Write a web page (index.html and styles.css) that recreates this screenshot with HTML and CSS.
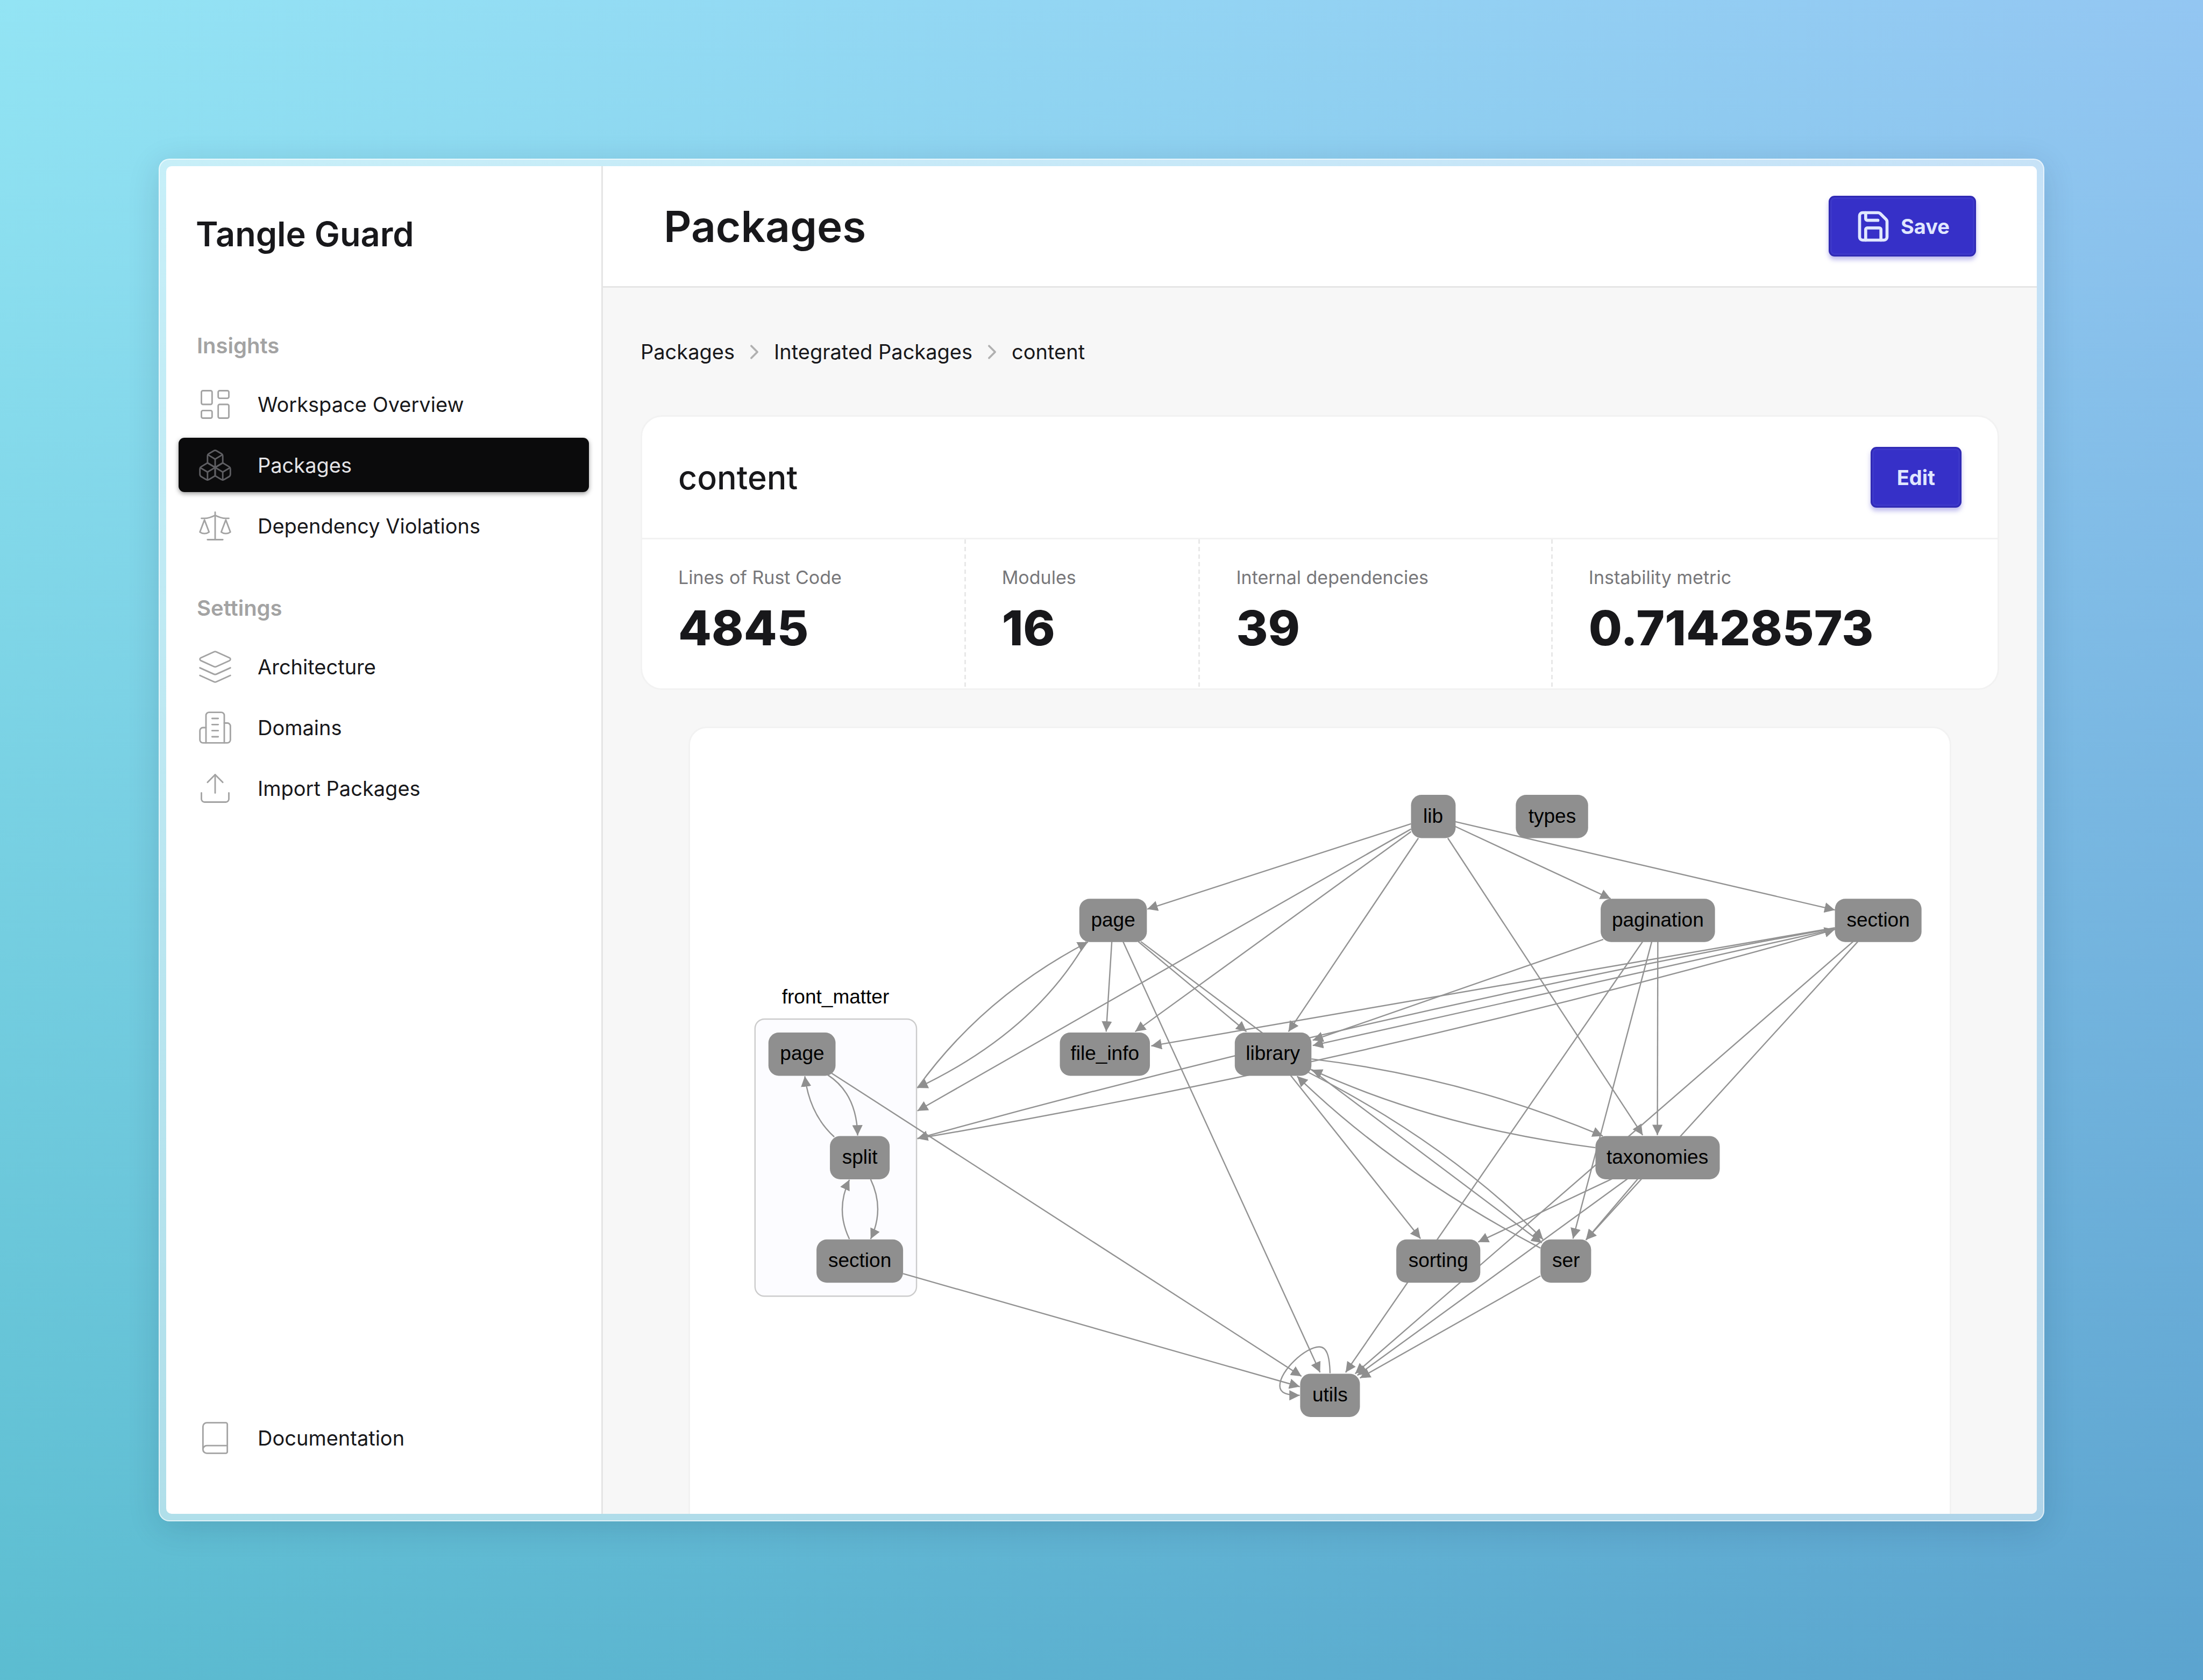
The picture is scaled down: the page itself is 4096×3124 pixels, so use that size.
FILE: index.html
```html
<!DOCTYPE html>
<html lang="en">
<head>
  <meta charset="utf-8">
  <meta name="viewport" content="width=device-width, initial-scale=1">
  <title>Packages - Tangle Guard</title>
  <link rel="stylesheet" href="styles.css">
</head>
<body>
  <div class="frame">
    <div class="window">
      <aside class="sidebar">
        <div class="brand">Tangle Guard</div>
        <nav class="nav" aria-label="Main">
          <section class="nav-group">
            <h2 class="nav-heading">Insights</h2>
            <ul class="nav-list">
              <li><a class="nav-item" href="#overview">
                <svg class="icon icon-thin" viewBox="0 0 24 24" aria-hidden="true"><rect width="7" height="9" x="3" y="3" rx="1"/><rect width="7" height="5" x="14" y="3" rx="1"/><rect width="7" height="9" x="14" y="12" rx="1"/><rect width="7" height="5" x="3" y="16" rx="1"/></svg>
                Workspace Overview</a></li>
              <li><a class="nav-item is-active" href="#packages" aria-current="page">
                <svg class="icon icon-thin" viewBox="0 0 24 24" aria-hidden="true"><path d="M2.97 12.92A2 2 0 0 0 2 14.63v3.24a2 2 0 0 0 .97 1.71l3 1.8a2 2 0 0 0 2.06 0L12 19v-5.5l-5-3-4.03 2.42Z"/><path d="m7 16.5-4.74-2.85"/><path d="m7 16.5 5-3"/><path d="M7 16.5v5.17"/><path d="M12 13.5V19l3.97 2.38a2 2 0 0 0 2.06 0l3-1.8a2 2 0 0 0 .97-1.71v-3.24a2 2 0 0 0-.97-1.71L17 10.5l-5 3Z"/><path d="m17 16.5-5-3"/><path d="m17 16.5 4.74-2.85"/><path d="M17 16.5v5.17"/><path d="M7.97 4.42A2 2 0 0 0 7 6.13v4.37l5 3 5-3V6.13a2 2 0 0 0-.97-1.71l-3-1.8a2 2 0 0 0-2.06 0l-3 1.8Z"/><path d="M12 8 7.26 5.15"/><path d="m12 8 4.74-2.85"/><path d="M12 13.5V8"/></svg>
                Packages</a></li>
              <li><a class="nav-item" href="#violations">
                <svg class="icon icon-thin" viewBox="0 0 24 24" aria-hidden="true"><path d="m16 16 3-8 3 8c-.87.65-1.92 1-3 1s-2.13-.35-3-1Z"/><path d="m2 16 3-8 3 8c-.87.65-1.92 1-3 1s-2.13-.35-3-1Z"/><path d="M7 21h10"/><path d="M12 3v18"/><path d="M3 7h2c2 0 5-1 7-2 2 1 5 2 7 2h2"/></svg>
                Dependency Violations</a></li>
            </ul>
          </section>
          <section class="nav-group">
            <h2 class="nav-heading">Settings</h2>
            <ul class="nav-list">
              <li><a class="nav-item" href="#architecture">
                <svg class="icon icon-thin" viewBox="0 0 24 24" aria-hidden="true"><path d="m12.83 2.18a2 2 0 0 0-1.66 0L2.6 6.08a1 1 0 0 0 0 1.83l8.58 3.91a2 2 0 0 0 1.66 0l8.58-3.9a1 1 0 0 0 0-1.83Z"/><path d="m22 12.65-9.17 4.16a2 2 0 0 1-1.66 0L2 12.65"/><path d="m22 17.65-9.17 4.16a2 2 0 0 1-1.66 0L2 17.65"/></svg>
                Architecture</a></li>
              <li><a class="nav-item" href="#domains">
                <svg class="icon icon-thin" viewBox="0 0 24 24" aria-hidden="true"><path d="M6 22V4a2 2 0 0 1 2-2h8a2 2 0 0 1 2 2v18Z"/><path d="M6 12H4a2 2 0 0 0-2 2v6a2 2 0 0 0 2 2h2"/><path d="M18 9h2a2 2 0 0 1 2 2v9a2 2 0 0 1-2 2h-2"/><path d="M10 6h4"/><path d="M10 10h4"/><path d="M10 14h4"/><path d="M10 18h4"/></svg>
                Domains</a></li>
              <li><a class="nav-item" href="#import">
                <svg class="icon icon-thin" viewBox="0 0 24 24" aria-hidden="true"><path d="M21 15v4a2 2 0 0 1-2 2H5a2 2 0 0 1-2-2v-4"/><path d="m17 8-5-5-5 5"/><path d="M12 3v12"/></svg>
                Import Packages</a></li>
            </ul>
          </section>
        </nav>
        <a class="nav-item nav-footer" href="#docs">
          <svg class="icon icon-thin" viewBox="0 0 24 24" aria-hidden="true"><path d="M4 19.5v-15A2.5 2.5 0 0 1 6.5 2H19a1 1 0 0 1 1 1v18a1 1 0 0 1-1 1H6.5a2.5 2.5 0 0 1 0-5H20"/></svg>
          Documentation</a>
      </aside>

      <main class="main">
        <header class="topbar">
          <h1 class="page-title">Packages</h1>
          <button class="button" type="button">
            <svg class="icon" viewBox="0 0 24 24" aria-hidden="true"><path d="M15.2 3a2 2 0 0 1 1.4.6l3.8 3.8a2 2 0 0 1 .6 1.4V19a2 2 0 0 1-2 2H5a2 2 0 0 1-2-2V5a2 2 0 0 1 2-2z"/><path d="M17 21v-7a1 1 0 0 0-1-1H8a1 1 0 0 0-1 1v7"/><path d="M7 3v4a1 1 0 0 0 1 1h7"/></svg>
            Save
          </button>
        </header>

        <div class="content">
          <nav aria-label="Breadcrumb">
            <ol class="breadcrumb">
              <li><a href="#packages">Packages</a></li>
              <li><svg class="chevron" viewBox="0 0 24 24" aria-hidden="true"><path d="m9 18 6-6-6-6"/></svg><a href="#integrated">Integrated Packages</a></li>
              <li><svg class="chevron" viewBox="0 0 24 24" aria-hidden="true"><path d="m9 18 6-6-6-6"/></svg><a href="#content" aria-current="page">content</a></li>
            </ol>
          </nav>

          <section class="card info-card">
            <div class="card-header">
              <h2 class="card-title">content</h2>
              <button class="button" type="button">Edit</button>
            </div>
            <dl class="stats">
              <div class="stat"><dt>Lines of Rust Code</dt><dd>4845</dd></div>
              <div class="stat"><dt>Modules</dt><dd>16</dd></div>
              <div class="stat"><dt>Internal dependencies</dt><dd>39</dd></div>
              <div class="stat"><dt>Instability metric</dt><dd>0.71428573</dd></div>
            </dl>
          </section>

          <section class="card graph-card">
            <svg class="graph" viewBox="1594 1681 2909 1900" role="img" aria-label="Module dependency graph">
              <defs>
                <marker id="arrow" viewBox="0 0 22 22" refX="22" refY="11" markerWidth="24" markerHeight="24" markerUnits="userSpaceOnUse" orient="auto"><path class="arrow-head" d="M0 0 22 11 0 22Z"/></marker>
              </defs>
              <rect class="cluster" x="1744" y="2353" width="373" height="640" rx="22"/>
              <g class="edges">
                <path d="M3259 1902 2650 2099"/>
                <path d="M3259 1914 2119 2565"/>
                <path d="M3259 1920 2622 2382"/>
                <path d="M3276 1935 2976 2382"/>
                <path d="M3344 1935 3794 2621"/>
                <path d="M3361 1908 3720 2075"/>
                <path d="M3361 1897 4238 2101"/>
                <path d="M2568 2174 2555 2382"/>
                <path d="M2629 2174 2879 2382"/>
                <path d="M2635 2174 3561 2870"/>
                <path d="M2594 2174 3049 3169"/>
                <path d="M2509 2174Q2388 2384 2119 2512"/>
                <path d="M2119 2512Q2270 2302 2513 2175"/>
                <path d="M4238 2142 2659 2415"/>
                <path d="M4238 2143Q3178 2335 2119 2629"/>
                <path d="M2119 2629Q3178 2448 4238 2146"/>
                <path d="M4238 2145 3032 2414"/>
                <path d="M3703 2169 3032 2402"/>
                <path d="M3794 2174 3108 3169"/>
                <path d="M3815 2174 3633 2860"/>
                <path d="M3829 2174 3828 2621"/>
                <path d="M4280 2174 3130 3172"/>
                <path d="M4291 2174 3663 2863"/>
                <path d="M3783 2722 3663 2863"/>
                <path d="M3723 2722 3414 2868"/>
                <path d="M3759 2722 3135 3176"/>
                <path d="M3558 2946 3141 3182"/>
                <path d="M2981 2483 3281 2860"/>
                <path d="M3029 2445Q3378 2487 3702 2623"/>
                <path d="M3685 2650Q3321 2603 3030 2470"/>
                <path d="M3558 2882Q3219 2703 2996 2485"/>
                <path d="M3022 2476Q3343 2640 3564 2862"/>
                <path d="M1912 2482Q1979 2525 1981 2622"/>
                <path d="M1927 2625Q1870 2573 1859 2485"/>
                <path d="M1921 2478 3006 3178"/>
                <path d="M2011 2723Q2044 2792 2011 2861"/>
                <path d="M1962 2861Q1929 2793 1962 2724"/>
                <path d="M2086 2941 3002 3202"/>
                <path d="M3072 3171C3071 3130 3064 3110 3047 3110 3016 3110 2956 3165 2956 3200 2956 3218 2975 3222 3002 3222"/>
              </g>
              <g class="nodes">
                <rect x="3259" y="1835" width="103" height="100" rx="24"/>
                <rect x="3501" y="1835" width="167" height="100" rx="24"/>
                <rect x="2493" y="2075" width="156" height="100" rx="24"/>
                <rect x="3697" y="2075" width="264" height="100" rx="24"/>
                <rect x="4238" y="2075" width="200" height="100" rx="24"/>
                <rect x="2448" y="2384" width="208" height="100" rx="24"/>
                <rect x="2852" y="2384" width="177" height="100" rx="24"/>
                <rect x="1775" y="2384" width="155" height="100" rx="24"/>
                <rect x="1917" y="2623" width="138" height="100" rx="24"/>
                <rect x="1886" y="2862" width="200" height="100" rx="24"/>
                <rect x="3685" y="2623" width="287" height="100" rx="24"/>
                <rect x="3225" y="2862" width="194" height="100" rx="24"/>
                <rect x="3558" y="2862" width="117" height="100" rx="24"/>
                <rect x="3003" y="3172" width="138" height="100" rx="24"/>
              </g>
              <g class="labels">
                <text x="1930" y="2317">front_matter</text>
                <text x="3310" y="1899">lib</text>
                <text x="3585" y="1899">types</text>
                <text x="2571" y="2139">page</text>
                <text x="3829" y="2139">pagination</text>
                <text x="4338" y="2139">section</text>
                <text x="2552" y="2448">file_info</text>
                <text x="2940" y="2448">library</text>
                <text x="1853" y="2448">page</text>
                <text x="1986" y="2687">split</text>
                <text x="1986" y="2926">section</text>
                <text x="3828" y="2687">taxonomies</text>
                <text x="3322" y="2926">sorting</text>
                <text x="3617" y="2926">ser</text>
                <text x="3072" y="3236">utils</text>
              </g>
            </svg>
          </section>
        </div>
      </main>
    </div>
  </div>
</body>
</html>
```
FILE: styles.css
```css
*,
*::before,
*::after {
  box-sizing: border-box;
}

body {
  margin: 0;
  padding: 295px;
  height: 100vh;
  display: flex;
  background:
    linear-gradient(to bottom, #ffffff, #9fd3da),
    linear-gradient(to right, #93e4f4, #93c6f2);
  background-blend-mode: multiply;
  color: #18181b;
  font-family: Inter, "Liberation Sans", sans-serif;
  font-size: 38px;
  line-height: 56px;
}

h1, h2, ul, ol, dl, dd {
  margin: 0;
  padding: 0;
}

ul, ol {
  list-style: none;
}

a {
  color: inherit;
  text-decoration: none;
}

/* Window frame */

.frame {
  flex: 1;
  min-width: 0;
  display: flex;
  padding: 12px;
  border: 2px solid rgba(255, 255, 255, 0.6);
  border-radius: 20px;
  background: rgba(255, 255, 255, 0.5);
  box-shadow: 0 12px 60px rgba(0, 30, 60, 0.14);
}

.window {
  flex: 1;
  min-width: 0;
  display: flex;
  overflow: hidden;
  border-radius: 10px;
  background: #ffffff;
}

/* Sidebar */

.sidebar {
  flex: none;
  width: 812px;
  display: flex;
  flex-direction: column;
  padding: 86px 23px 91px;
  border-right: 3px solid #e5e5e5;
}

.brand {
  padding: 0 32px;
  margin-bottom: 140px;
  font-size: 63px;
  font-weight: 600;
  line-height: 80px;
}

.nav {
  display: flex;
  flex-direction: column;
  gap: 75px;
}

.nav-heading {
  padding: 0 34px;
  margin-bottom: 30px;
  color: #a3a3a3;
  font-size: 40px;
  font-weight: 600;
  line-height: 56px;
}

.nav-list {
  display: flex;
  flex-direction: column;
  gap: 12px;
}

.nav-item {
  display: flex;
  align-items: center;
  gap: 45px;
  height: 101px;
  padding: 0 34px;
  border-radius: 11px;
}

.nav-item .icon {
  color: #a3a3a3;
}

.nav-item.is-active {
  background: #0b0b0c;
  color: #e4e4e7;
  box-shadow: 0 3px 8px rgba(0, 0, 0, 0.4);
}

.nav-item.is-active .icon {
  color: #5f5f63;
}

.nav-footer {
  margin-top: auto;
}

.icon {
  flex: none;
  width: 68px;
  height: 68px;
  fill: none;
  stroke: currentColor;
  stroke-width: 2;
  stroke-linecap: round;
  stroke-linejoin: round;
}

.icon-thin {
  stroke-width: 1;
}

/* Main column */

.main {
  flex: 1;
  min-width: 0;
  overflow: hidden;
  background: #f7f7f7;
}

.topbar {
  display: flex;
  align-items: center;
  justify-content: space-between;
  padding: 55px 113px;
  border-bottom: 3px solid #e5e5e5;
  background: #ffffff;
}

.page-title {
  font-size: 80px;
  font-weight: 600;
  line-height: 112px;
}

.button {
  display: flex;
  align-items: center;
  gap: 17px;
  height: 113px;
  padding: 0 46px;
  border: 3px solid #302ab4;
  border-radius: 11px;
  background: #3630c8;
  box-shadow: inset 0 0 0 3px rgba(255, 255, 255, 0.04), 0 6px 8px rgba(67, 56, 202, 0.35);
  color: #e0e7ff;
  font-family: inherit;
  font-size: 38px;
  font-weight: 700;
  line-height: 56px;
}

.content {
  padding: 91px 70px;
}

.breadcrumb {
  display: flex;
  gap: 14px;
  margin-bottom: 90px;
}

.breadcrumb li {
  display: flex;
  align-items: center;
  gap: 14px;
}

.chevron {
  width: 45px;
  height: 45px;
  fill: none;
  stroke: #b0b0b0;
  stroke-width: 2;
  stroke-linecap: round;
  stroke-linejoin: round;
}

.card {
  border: 3px solid #f2f2f2;
  background: #ffffff;
}

.info-card {
  margin-bottom: 68px;
  border-radius: 40px;
}

.card-header {
  display: flex;
  align-items: center;
  justify-content: space-between;
  padding: 56px 67px;
  border-bottom: 3px solid #f2f2f2;
}

.card-title {
  font-size: 61px;
  font-weight: 500;
  line-height: 80px;
}

.stats {
  display: flex;
}

.stat {
  flex: 1 1 auto;
  padding: 47px 67px 56px;
}

.stat:not(:last-child) {
  background: repeating-linear-gradient(to bottom, #e8e8e8 0 8px, transparent 8px 14px) right top / 3px 100% no-repeat;
}

.stat dt {
  margin-bottom: 14px;
  color: #77777a;
  font-size: 34px;
  line-height: 48px;
}

.stat dd {
  font-size: 90px;
  font-weight: 800;
  line-height: 112px;
}

/* Dependency graph */

.graph-card {
  margin: 0 89px;
  border-radius: 34px;
}

.graph {
  display: block;
  width: 100%;
}

.cluster {
  fill: #fcfcff;
  stroke: #cccccc;
  stroke-width: 3;
}

.edges path {
  fill: none;
  stroke: #939393;
  stroke-width: 3;
  marker-end: url(#arrow);
}

.arrow-head {
  fill: #8f8f8f;
}

.nodes rect {
  fill: #8f8f8f;
}

.labels text {
  fill: #000000;
  font-family: "Liberation Sans", Arial, sans-serif;
  font-size: 46px;
  text-anchor: middle;
}
```
